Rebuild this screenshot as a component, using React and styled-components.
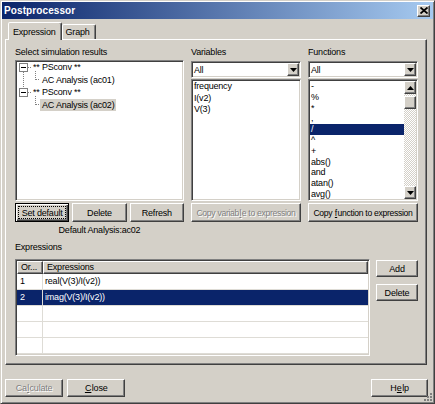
import styled, { createGlobalStyle, css } from 'styled-components'

const GlobalStyle = createGlobalStyle`
  html, body { margin:0; padding:0; background:#D4D0C8; }
  body {
    font-family:"Liberation Sans", Arial, sans-serif;
    font-size:9px;
    letter-spacing:-0.2px;
    color:#000;
  }
  * { box-sizing:border-box; }
`

const raised = css`
  border:1px solid;
  border-color:#fff #404040 #404040 #fff;
  box-shadow:inset -1px -1px #808080;
  background:#D4D0C8;
`

const sunken = css`
  border:1px solid;
  border-color:#808080 #fff #fff #808080;
  box-shadow:inset 1px 1px #404040, inset -1px -1px #D4D0C8;
  padding:1px;
  background:#fff;
`

const Window = styled.div`
  position:relative;
  width:435px;
  height:404px;
  background:#D4D0C8;
  border:1px solid;
  border-color:#D4D0C8 #404040 #404040 #D4D0C8;
  box-shadow:inset 1px 1px #fff, inset -1px -1px #808080;
  padding:1px;
  display:flex;
  flex-direction:column;
`

const TitleBar = styled.div`
  height:17px;
  display:flex;
  align-items:center;
  justify-content:space-between;
  padding:0 3px 0 2px;
  background:linear-gradient(to right, #0A246A, #A6CAF0);
`

const Title = styled.span`
  color:#fff;
  font-weight:700;
  font-size:10px;
  letter-spacing:0.1px;
`

const CloseBtn = styled.div`
  ${raised};
  width:13px;
  height:12px;
  display:flex;
  align-items:center;
  justify-content:center;
`

const Body = styled.div`
  flex:1;
  padding:3px 6px 0 3px;
  display:flex;
  flex-direction:column;
`

const TabRow = styled.div`
  display:flex;
  align-items:flex-end;
  height:17px;
  padding-left:3px;
  position:relative;
  z-index:1;
`

const Tab = styled.div`
  height:${({ $active }) => ($active ? '18px' : '15px')};
  margin-bottom:${({ $active }) => ($active ? '-1px' : '0')};
  padding:${({ $active }) => ($active ? '0 5px 0 4px' : '0 5px 0 3px')};
  background:#D4D0C8;
  border:1px solid;
  border-bottom:none;
  border-color:#fff #404040 transparent #fff;
  box-shadow:inset -1px 0 #808080;
  border-radius:2px 2px 0 0;
  display:flex;
  align-items:center;
`

const Panel = styled.div`
  height:326px;
  border:1px solid;
  border-color:#fff #404040 #404040 #fff;
  box-shadow:inset -1px -1px #808080;
  padding:5px 8px 0 9px;
`

const TopGrid = styled.div`
  display:grid;
  grid-template-columns:169px 110px 110px;
  column-gap:7px;
`

const Col = styled.div`
  display:flex;
  flex-direction:column;
`

const Label = styled.div`
  height:15px;
  line-height:15px;
`

const TreeBox = styled.div`
  ${sunken};
  height:141px;
  margin-bottom:2px;
  padding-top:0;
`

const TreeRow = styled.div`
  position:relative;
  height:12.5px;
  display:flex;
  align-items:center;
  padding-left:${({ $child }) => ($child ? '23px' : '14px')};
`

const Expander = styled.span`
  position:absolute;
  left:2px;
  top:2px;
  width:9px;
  height:9px;
  border:1px solid #808080;
  background:#fff;
  &::after {
    content:'';
    position:absolute;
    left:1px;
    top:3px;
    width:5px;
    height:1px;
    background:#000;
  }
`

const RootLine = styled.span`
  position:absolute;
  left:6px;
  top:11px;
  height:15px;
  border-left:1px dotted #808080;
`

const StubLine = styled.span`
  position:absolute;
  left:11px;
  top:6px;
  width:3px;
  border-top:1px dotted #808080;
`

const ChildLine = styled.span`
  position:absolute;
  left:18px;
  top:-3px;
  width:4px;
  height:9px;
  border-left:1px dotted #808080;
  border-bottom:1px dotted #808080;
`

const TreeText = styled.span`
  padding:1px 2px;
  background:${({ $selected }) => ($selected ? '#D4D0C8' : 'transparent')};
  white-space:nowrap;
`

const ButtonRow = styled.div`
  display:grid;
  grid-template-columns:repeat(3, 1fr);
  gap:3px;
`

const Button = styled.button`
  font-family:"Liberation Sans", Arial, sans-serif;
  font-size:${({ $tight }) => ($tight ? '8.6px' : '9px')};
  letter-spacing:${({ $tight }) => ($tight ? '-0.3px' : '-0.2px')};
  height:${({ $h }) => $h || 19}px;
  width:${({ $w }) => ($w ? `${$w}px` : 'auto')};
  ${raised};
  color:${({ disabled }) => (disabled ? '#808080' : '#000')};
  text-shadow:${({ disabled }) => (disabled ? '1px 1px #fff' : 'none')};
  padding:0;
  white-space:nowrap;
  ${({ $default }) =>
    $default &&
    css`
      border-color:#000;
      box-shadow:inset 1px 1px #fff, inset -1px -1px #404040, inset -2px -2px #808080;
      outline:1px dotted #000;
      outline-offset:-4px;
    `}
`

const Key = styled.u`
  letter-spacing:0;
  margin:0 0.4px;
`

const Combo = styled.div`
  ${sunken};
  height:17px;
  margin:1px 0 1px;
  display:flex;
  align-items:center;
  justify-content:space-between;
  padding-left:2px;
`

const ArrowBtn = styled.div`
  ${raised};
  width:12px;
  height:13px;
  flex-shrink:0;
  display:flex;
  align-items:center;
  justify-content:center;
`

const ListBox = styled.div`
  ${sunken};
  height:122px;
  margin-bottom:2px;
  display:flex;
  overflow:hidden;
`

const ListItems = styled.div`
  flex:1;
  overflow:hidden;
`

const ListItem = styled.div`
  height:${({ $h }) => $h || 11}px;
  line-height:${({ $h }) => $h || 11}px;
  padding-left:1px;
  white-space:nowrap;
  background:${({ $selected }) => ($selected ? '#0A246A' : 'transparent')};
  color:${({ $selected }) => ($selected ? '#fff' : '#000')};
`

const ScrollBar = styled.div`
  width:12px;
  display:flex;
  flex-direction:column;
  background:repeating-conic-gradient(#fff 0 25%, #D4D0C8 0 50%) 0 0 / 2px 2px;
`

const Thumb = styled.div`
  ${raised};
  height:13px;
  margin-top:2px;
`

const Track = styled.div`
  flex:1;
`

const DefaultText = styled.div`
  width:169px;
  height:17px;
  line-height:17px;
  text-align:center;
`

const SectionLabel = styled.div`
  height:16px;
  line-height:16px;
`

const ExprRow = styled.div`
  display:flex;
  gap:6px;
  margin-top:4px;
`

const Table = styled.div`
  ${sunken};
  width:357px;
  height:97px;
  overflow:hidden;
`

const HeadRow = styled.div`
  display:grid;
  grid-template-columns:26px 1fr;
  height:13px;
`

const HeadCell = styled.div`
  ${raised};
  line-height:11px;
  padding-left:3px;
  white-space:nowrap;
`

const Row = styled.div`
  display:grid;
  grid-template-columns:26px 1fr;
  height:16px;
  border-bottom:1px solid #DEDCD6;
  background:${({ $selected }) => ($selected ? '#0A246A' : '#fff')};
  color:${({ $selected }) => ($selected ? '#fff' : '#000')};
`

const Cell = styled.div`
  line-height:15px;
  padding-left:${({ $first }) => ($first ? '3px' : '2px')};
  border-right:${({ $first }) => ($first ? '1px solid #DEDCD6' : 'none')};
  white-space:nowrap;
`

const SideButtons = styled.div`
  display:flex;
  flex-direction:column;
  gap:7px;
  padding-top:1px;
`

const Footer = styled.div`
  display:flex;
  gap:4px;
  margin-top:14px;
`

const Spacer = styled.div`
  flex:1;
`

const Grip = styled.svg`
  position:absolute;
  right:1px;
  bottom:1px;
`

const Tri = ({ down }) => (
  <svg width="7" height="4" viewBox="0 0 7 4">
    <path d={down ? 'M0 0h7L3.5 4z' : 'M0 4h7L3.5 0z'} fill="#000" />
  </svg>
)

const functions = ['-', '%', '*', ',', '/', '^', '+', 'abs()', 'and', 'atan()', 'avg()']

export default function App() {
  return (
    <>
      <GlobalStyle />
      <Window>
        <TitleBar>
          <Title>Postprocessor</Title>
          <CloseBtn>
            <svg width="8" height="7" viewBox="0 0 8 7">
              <path d="M0.5 0.5L7.5 6.5M7.5 0.5L0.5 6.5" stroke="#000" strokeWidth="1.8" />
            </svg>
          </CloseBtn>
        </TitleBar>
        <Body>
          <TabRow>
            <Tab $active>Expression</Tab>
            <Tab>Graph</Tab>
          </TabRow>
          <Panel>
            <TopGrid>
              <Col>
                <Label>Select simulation results</Label>
                <TreeBox>
                  <TreeRow>
                    <Expander />
                    <StubLine />
                    <RootLine />
                    <TreeText>** PSconv **</TreeText>
                  </TreeRow>
                  <TreeRow $child>
                    <ChildLine />
                    <TreeText>AC Analysis (ac01)</TreeText>
                  </TreeRow>
                  <TreeRow>
                    <Expander />
                    <StubLine />
                    <TreeText>** PSconv **</TreeText>
                  </TreeRow>
                  <TreeRow $child>
                    <ChildLine />
                    <TreeText $selected>AC Analysis (ac02)</TreeText>
                  </TreeRow>
                </TreeBox>
                <ButtonRow>
                  <Button $default>Set default</Button>
                  <Button>Delete</Button>
                  <Button>Refresh</Button>
                </ButtonRow>
              </Col>
              <Col>
                <Label>Variables</Label>
                <Combo>
                  All
                  <ArrowBtn>
                    <Tri down />
                  </ArrowBtn>
                </Combo>
                <ListBox>
                  <ListItems>
                    <ListItem $h={11.5}>frequency</ListItem>
                    <ListItem $h={11.5}>I(v2)</ListItem>
                    <ListItem $h={11.5}>V(3)</ListItem>
                  </ListItems>
                </ListBox>
                <Button disabled $tight>
                  Copy variab<Key>l</Key>e to expression
                </Button>
              </Col>
              <Col>
                <Label>Functions</Label>
                <Combo>
                  All
                  <ArrowBtn>
                    <Tri down />
                  </ArrowBtn>
                </Combo>
                <ListBox>
                  <ListItems>
                    {functions.map((f) => (
                      <ListItem key={f} $h={10.8} $selected={f === '/'}>
                        {f}
                      </ListItem>
                    ))}
                  </ListItems>
                  <ScrollBar>
                    <ArrowBtn>
                      <Tri />
                    </ArrowBtn>
                    <Thumb />
                    <Track />
                    <ArrowBtn>
                      <Tri down />
                    </ArrowBtn>
                  </ScrollBar>
                </ListBox>
                <Button $tight>
                  Copy <Key>f</Key>unction to expression
                </Button>
              </Col>
            </TopGrid>
            <DefaultText>Default Analysis:ac02</DefaultText>
            <SectionLabel>Expressions</SectionLabel>
            <ExprRow>
              <Table>
                <HeadRow>
                  <HeadCell>Or...</HeadCell>
                  <HeadCell>Expressions</HeadCell>
                </HeadRow>
                <Row>
                  <Cell $first>1</Cell>
                  <Cell>real(V(3)/I(v2))</Cell>
                </Row>
                <Row $selected>
                  <Cell $first>2</Cell>
                  <Cell>imag(V(3)/I(v2))</Cell>
                </Row>
                <Row>
                  <Cell $first />
                  <Cell />
                </Row>
                <Row>
                  <Cell $first />
                  <Cell />
                </Row>
                <Row>
                  <Cell $first />
                  <Cell />
                </Row>
              </Table>
              <SideButtons>
                <Button $w={42} $h={17}>Add</Button>
                <Button $w={42} $h={17}>Delete</Button>
              </SideButtons>
            </ExprRow>
          </Panel>
          <Footer>
            <Button $w={58} $h={18} disabled>
              Ca<Key>l</Key>culate
            </Button>
            <Button $w={58} $h={18}>
              <Key>C</Key>lose
            </Button>
            <Spacer />
            <Button $w={57} $h={18} style={{ marginRight: -1 }}>
              H<Key>e</Key>lp
            </Button>
          </Footer>
        </Body>
        <Grip width="11" height="11" viewBox="0 0 11 11">
          <g fill="#808080">
            <rect x="8" y="2" width="2" height="2" />
            <rect x="5" y="5" width="2" height="2" />
            <rect x="8" y="5" width="2" height="2" />
            <rect x="2" y="8" width="2" height="2" />
            <rect x="5" y="8" width="2" height="2" />
            <rect x="8" y="8" width="2" height="2" />
          </g>
        </Grip>
      </Window>
    </>
  )
}
